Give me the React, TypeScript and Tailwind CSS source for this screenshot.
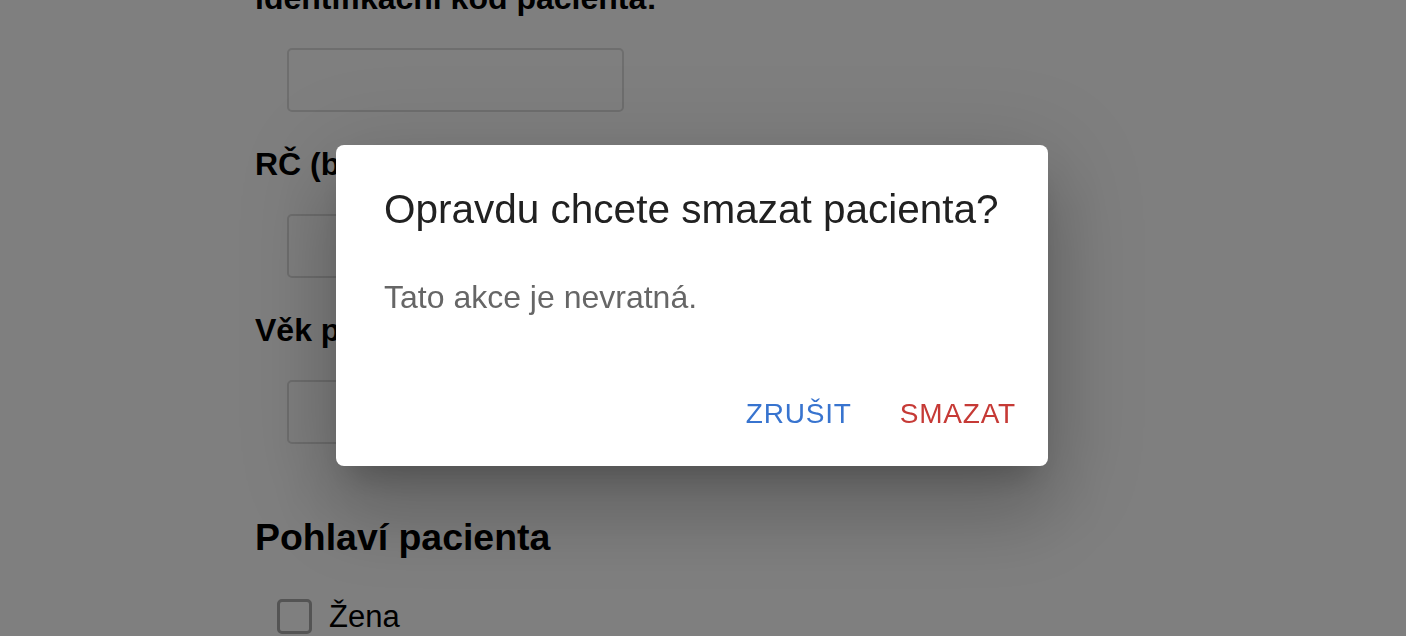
import React from 'react';

const fields = ['identifikační kód pacienta:', 'RČ (bez lomítka):', 'Věk pacienta:'];

export default function App() {
  return (
    <div className="relative h-[636px] w-full overflow-hidden bg-white font-['Liberation_Sans',Arial,sans-serif] text-black">
      {/* Form behind the dialog */}
      <div className="pl-[255px] -mt-[22px]">
        {fields.map((label) => (
          <div key={label} className="mb-[32px]">
            <div className="h-[40px] text-[32px] leading-[40px] font-bold">{label}</div>
            <input
              type="text"
              className="mt-[30px] ml-[32px] block h-[64px] w-[337px] rounded-[5px] border-2 border-[#dcdcdc] bg-white"
            />
          </div>
        ))}
        <h3 className="mt-[72px] h-[43px] text-[37.44px] leading-[43px] font-bold">Pohlaví pacienta</h3>
        <div className="mt-[40px] flex items-center pl-[22px]">
          <span className="block h-[35px] w-[35px] rounded-[5px] border-[3px] border-[#a8a8a8] bg-white" />
          <span className="ml-[17px] text-[31px] leading-[35px]">Žena</span>
        </div>
      </div>

      {/* Overlay */}
      <div className="fixed inset-0 bg-black/50" />

      {/* Dialog */}
      <div className="absolute left-[336px] top-[145px] w-[712px] rounded-[8px] bg-white shadow-[0_22px_30px_-14px_rgba(0,0,0,0.2),0_48px_76px_6px_rgba(0,0,0,0.14),0_18px_92px_16px_rgba(0,0,0,0.12)]">
        <h2 className="px-[48px] py-[32px] text-[40.5px] leading-[64px] font-normal text-[#212121]">
          Opravdu chcete smazat pacienta?
        </h2>
        <div className="px-[48px] pb-[40px]">
          <p className="text-[32px] leading-[48px] text-[#666666]">Tato akce je nevratná.</p>
        </div>
        <div className="flex items-center justify-end p-[16px]">
          <button className="px-[16px] py-[12px] text-[28px] leading-[49px] uppercase tracking-[0.02857em] text-[#3874cf]">
            Zrušit
          </button>
          <button className="ml-[16px] px-[16px] py-[12px] text-[28px] leading-[49px] uppercase tracking-[0.02857em] text-[#c63a36]">
            Smazat
          </button>
        </div>
      </div>
    </div>
  );
}
